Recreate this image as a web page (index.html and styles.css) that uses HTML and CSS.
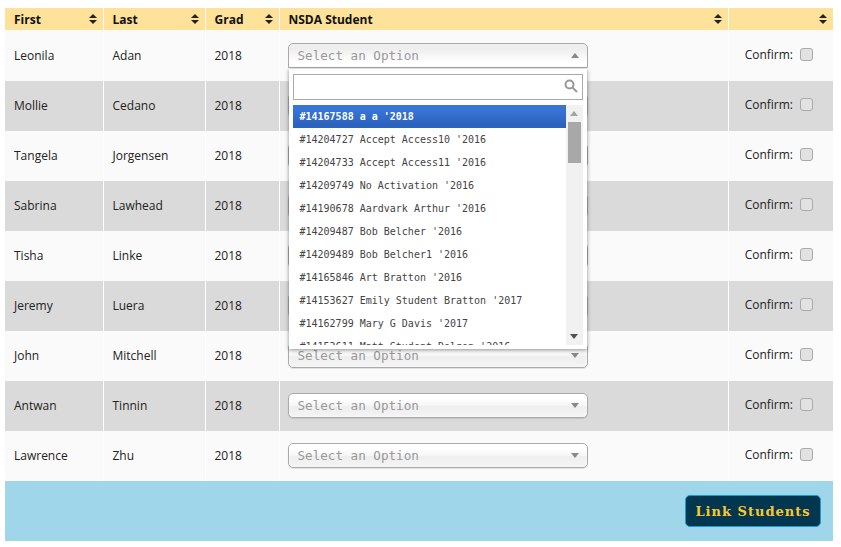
FILE: index.html
```html
<!DOCTYPE html>
<html lang="en">
<head>
  <meta charset="UTF-8">
  <title>Link Students</title>
  <link rel="stylesheet" href="styles.css">
</head>
<body>

  <svg class="defs" width="0" height="0">
    <symbol id="sort" viewBox="0 0 8 10">
      <path d="M4 0 L8 4 H0 Z M0 6 H8 L4 10 Z"/>
    </symbol>
  </svg>

  <table class="roster">
    <colgroup>
      <col class="col-first"><col class="col-last"><col class="col-grad"><col class="col-nsda"><col class="col-confirm">
    </colgroup>
    <thead>
      <tr>
        <th>First<svg class="sort"><use href="#sort"/></svg></th>
        <th>Last<svg class="sort"><use href="#sort"/></svg></th>
        <th>Grad<svg class="sort"><use href="#sort"/></svg></th>
        <th>NSDA Student<svg class="sort"><use href="#sort"/></svg></th>
        <th><svg class="sort"><use href="#sort"/></svg></th>
      </tr>
    </thead>
    <tbody>
      <tr>
        <td>Leonila</td><td>Adan</td><td>2018</td>
        <td>
          <div class="chooser open">
            <div class="choice">Select an Option<span class="arrow up"></span></div>
            <div class="drop">
              <div class="search">
                <input type="text">
                <svg class="lens" viewBox="0 0 14 14"><circle cx="5.5" cy="5.5" r="4" /><path d="M8.5 8.5 L13 13"/></svg>
              </div>
              <div class="results">
                <ul>
                  <li class="active">#14167588 a a '2018</li>
                  <li>#14204727 Accept Access10 '2016</li>
                  <li>#14204733 Accept Access11 '2016</li>
                  <li>#14209749 No Activation '2016</li>
                  <li>#14190678 Aardvark Arthur '2016</li>
                  <li>#14209487 Bob Belcher '2016</li>
                  <li>#14209489 Bob Belcher1 '2016</li>
                  <li>#14165846 Art Bratton '2016</li>
                  <li>#14153627 Emily Student Bratton '2017</li>
                  <li>#14162799 Mary G Davis '2017</li>
                  <li>#14153611 Matt Student Dolgon '2016</li>
                </ul>
                <div class="scrollbar">
                  <span class="arrow up"></span>
                  <div class="track"><div class="thumb"></div></div>
                  <span class="arrow down"></span>
                </div>
              </div>
            </div>
          </div>
        </td>
        <td><label class="confirm">Confirm:<input type="checkbox"></label></td>
      </tr>
      <tr>
        <td>Mollie</td><td>Cedano</td><td>2018</td>
        <td><div class="chooser"><div class="choice">Select an Option<span class="arrow down"></span></div></div></td>
        <td><label class="confirm">Confirm:<input type="checkbox"></label></td>
      </tr>
      <tr>
        <td>Tangela</td><td>Jorgensen</td><td>2018</td>
        <td><div class="chooser"><div class="choice">Select an Option<span class="arrow down"></span></div></div></td>
        <td><label class="confirm">Confirm:<input type="checkbox"></label></td>
      </tr>
      <tr>
        <td>Sabrina</td><td>Lawhead</td><td>2018</td>
        <td><div class="chooser"><div class="choice">Select an Option<span class="arrow down"></span></div></div></td>
        <td><label class="confirm">Confirm:<input type="checkbox"></label></td>
      </tr>
      <tr>
        <td>Tisha</td><td>Linke</td><td>2018</td>
        <td><div class="chooser"><div class="choice">Select an Option<span class="arrow down"></span></div></div></td>
        <td><label class="confirm">Confirm:<input type="checkbox"></label></td>
      </tr>
      <tr>
        <td>Jeremy</td><td>Luera</td><td>2018</td>
        <td><div class="chooser"><div class="choice">Select an Option<span class="arrow down"></span></div></div></td>
        <td><label class="confirm">Confirm:<input type="checkbox"></label></td>
      </tr>
      <tr>
        <td>John</td><td>Mitchell</td><td>2018</td>
        <td><div class="chooser"><div class="choice">Select an Option<span class="arrow down"></span></div></div></td>
        <td><label class="confirm">Confirm:<input type="checkbox"></label></td>
      </tr>
      <tr>
        <td>Antwan</td><td>Tinnin</td><td>2018</td>
        <td><div class="chooser"><div class="choice">Select an Option<span class="arrow down"></span></div></div></td>
        <td><label class="confirm">Confirm:<input type="checkbox"></label></td>
      </tr>
      <tr>
        <td>Lawrence</td><td>Zhu</td><td>2018</td>
        <td><div class="chooser"><div class="choice">Select an Option<span class="arrow down"></span></div></div></td>
        <td><label class="confirm">Confirm:<input type="checkbox"></label></td>
      </tr>
    </tbody>
  </table>

  <div class="actions">
    <button type="button">Link Students</button>
  </div>

</body>
</html>
```

FILE: styles.css
```css
body {
  margin: 8px 8px 0 5px;
  font-family: 'Open Sans', sans-serif;
  font-size: 12px;
  color: #222;
  background-color: white;
}

.defs {
  position: absolute;
}

.roster {
  width: 828px;
  border-collapse: collapse;
  table-layout: fixed;
}

.col-first { width: 98px; }
.col-last { width: 102px; }
.col-grad { width: 74px; }
.col-nsda { width: 449px; }
.col-confirm { width: 105px; }

.roster th {
  position: relative;
  height: 22px;
  padding: 0 9px;
  background-color: #fee29a;
  border-right: 1px solid white;
  border-bottom: 1px solid #fafafa;
  font-size: 12px;
  font-weight: 700;
  text-align: left;
  color: #111;
}

.roster th:last-child,
.roster td:last-child {
  border-right: none;
}

.sort {
  position: absolute;
  right: 6px;
  top: 6px;
  width: 8px;
  height: 10px;
  fill: #222;
}

.roster td {
  height: 49px;
  padding: 0 9px 1px;
  border-right: 1px solid white;
  background-color: #fafafa;
}

.roster td:nth-child(4) {
  padding-left: 8px;
}

.roster tbody tr:nth-child(even) td {
  background-color: #dadada;
}

.chooser {
  position: relative;
  width: 300px;
  font-family: 'DejaVu Sans Mono', monospace;
}

.choice {
  position: relative;
  box-sizing: border-box;
  height: 25px;
  padding-left: 9px;
  line-height: 24px;
  font-size: 12.6px;
  color: #999;
  border: 1px solid #aaa;
  border-radius: 5px;
  background: linear-gradient(#fff 20%, #f6f6f6 50%, #eee 52%, #f4f4f4 100%);
  box-shadow: 0 0 3px white inset, 0 1px 1px rgba(0,0,0,0.1);
}

.open .choice {
  border-bottom-color: #aaa;
  border-radius: 5px 5px 0 0;
  background: linear-gradient(#eee 20%, #fff 80%);
  box-shadow: none;
}

.arrow {
  display: block;
  width: 0;
  height: 0;
  border-left: 4px solid transparent;
  border-right: 4px solid transparent;
}

.arrow.up {
  border-bottom: 5px solid #888;
}

.arrow.down {
  border-top: 5px solid #888;
}

.choice .arrow {
  position: absolute;
  right: 8px;
  top: 9px;
}

.drop {
  position: absolute;
  z-index: 5;
  left: 1px;
  top: 26px;
  box-sizing: border-box;
  width: 298px;
  height: 280px;
  padding: 5px 4px 0;
  background-color: white;
  box-shadow: 0 1px 4px rgba(0,0,0,0.45);
}

.search {
  position: relative;
  height: 25px;
}

.search input {
  box-sizing: border-box;
  width: 100%;
  height: 26px;
  margin: 0;
  padding: 0 4px;
  border: 1px solid #aaa;
  background-color: white;
}

.lens {
  position: absolute;
  right: 5px;
  top: 5px;
  width: 14px;
  height: 14px;
  fill: none;
  stroke: #999;
  stroke-width: 2;
}

.results {
  display: flex;
  height: 240px;
  margin-top: 6px;
  overflow: hidden;
}

.results ul {
  flex: 1;
  margin: 0;
  padding: 0;
  list-style: none;
  font-size: 10px;
  color: #444;
  overflow: hidden;
}

.results li {
  height: 23px;
  padding-left: 7px;
  line-height: 23px;
  white-space: nowrap;
}

.results li.active {
  color: white;
  font-weight: 700;
  background: linear-gradient(#3875d7 20%, #2a62bc 90%);
}

.scrollbar {
  display: flex;
  flex-direction: column;
  align-items: center;
  width: 17px;
  background-color: #f1f1f1;
}

.scrollbar .arrow {
  flex: none;
  margin: 6px 0;
}

.scrollbar .arrow.up {
  border-bottom-color: #a3a3a3;
}

.scrollbar .arrow.down {
  border-top-color: #505050;
}

.track {
  flex: 1;
  width: 100%;
}

.thumb {
  width: 13px;
  height: 41px;
  margin: 0 auto;
  background-color: #a8a8a8;
}

.confirm {
  display: flex;
  align-items: center;
  justify-content: flex-end;
  gap: 7px;
  padding: 0 11px 2px 0;
  line-height: 14px;
  color: #222;
}

.confirm input {
  appearance: none;
  width: 13px;
  height: 13px;
  margin: 0;
  border: 1px solid #aaa;
  border-radius: 3px;
  background-color: #e2e2e2;
}

.actions {
  display: flex;
  justify-content: flex-end;
  align-items: center;
  box-sizing: border-box;
  height: 60px;
  padding-right: 12px;
  background-color: #9fd6ea;
}

.actions button {
  width: 136px;
  height: 32px;
  padding: 0;
  font-family: 'DejaVu Serif', serif;
  font-size: 13px;
  font-weight: 700;
  letter-spacing: 1px;
  color: #fdc72f;
  background-color: #02374f;
  border: 1px solid #1a9ccc;
  border-radius: 5px;
}
```
